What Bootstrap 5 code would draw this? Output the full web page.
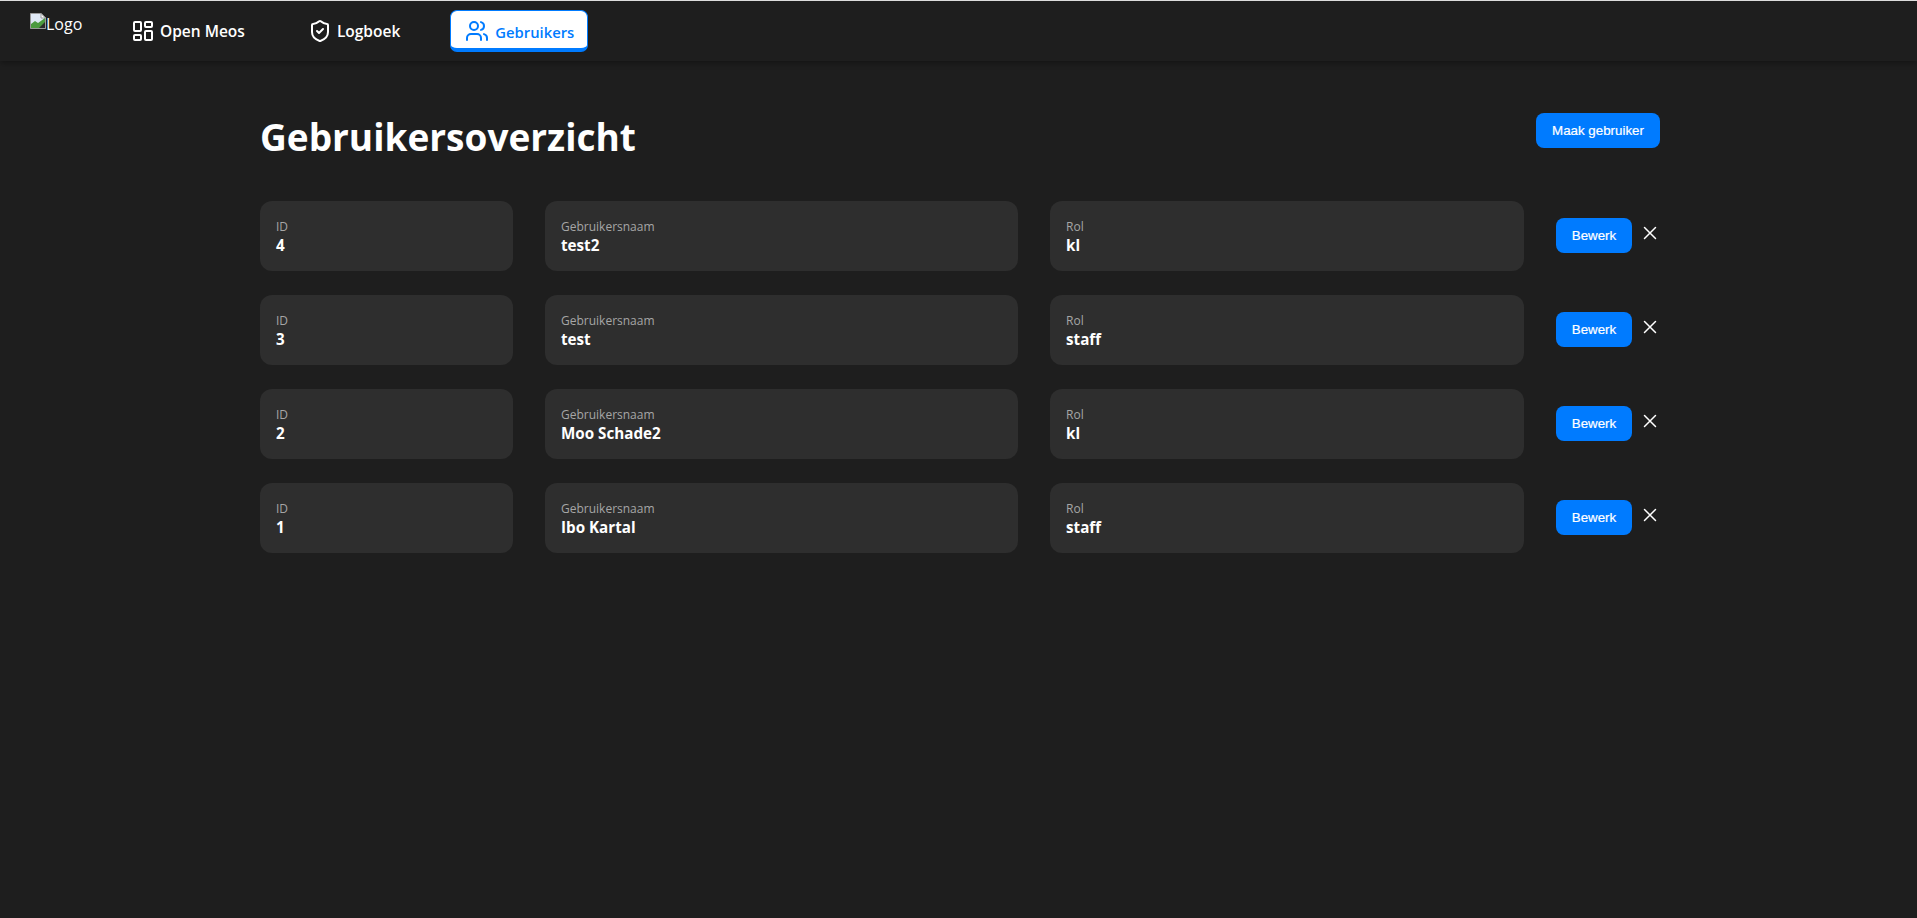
<!DOCTYPE html>
<html lang="nl"><head><meta charset="utf-8"><title>Gebruikers</title>
<link href="https://cdn.jsdelivr.net/npm/bootstrap@5.3.0/dist/css/bootstrap.min.css" rel="stylesheet">
<style>
html,body{height:100%}
body{background:#1e1e1e;color:#fff;font-family:"Open Sans","Noto Sans",sans-serif;overflow:hidden}
.topbar{height:61px;background:#1e1e1e;border-top:1px solid #ddd;box-shadow:0 2px 6px rgba(0,0,0,.35);padding:9px 0 0 30px;gap:32px}
.logo-alt{width:52px;height:24px;font-size:16px;line-height:22px;margin-right:1px;margin-top:3px}
.logo-alt svg{flex:none}
.nav-entry{height:42px;padding:0 16px;gap:5px;font-size:15.5px;font-weight:600;color:#fff;text-decoration:none;border-radius:7px}
.nav-entry span{padding-top:2px}
.nav-log{margin-left:-1px;margin-right:2px}
.nav-entry.on{background:#fff;color:#007bff;border:1px solid #007bff;border-bottom-width:4px;padding:3px 13px 0 14px;gap:6px;font-size:14.8px}
.page-wrap{width:1400px;margin-left:260px}
.head-line{padding-top:51px;height:140px}
.page-title{font-size:37px;font-weight:700;margin:0;line-height:50px}
.make-btn,.edit-btn{background:#007bff;border:0;color:#fff;font-family:"Liberation Sans",sans-serif;font-size:13.33px;-webkit-text-stroke:.2px #fff;border-radius:8px;height:35px;display:flex;align-items:center;justify-content:center;padding:0}
.make-btn:hover,.edit-btn:hover{background:#007bff;color:#fff}
.make-btn{width:124px;margin-top:1px}
.edit-btn{width:76px}
.user-row{display:grid;grid-template-columns:253px 473px 474px 1fr;column-gap:32px;margin-bottom:24px}
.info-tile{height:70px;background:#2e2e2e;border-radius:12px;padding:16px 16px 0;line-height:1}
.tile-label{font-size:12px;color:#a6a6a6;line-height:19px}
.tile-value{font-size:15.2px;font-weight:700;line-height:19px}
.row-actions{gap:10px;padding-bottom:1px}
.close-x{background:none;border:0;padding:0;width:16px;height:16px;display:flex;margin-bottom:5px}
</style></head><body>
<nav class="topbar d-flex align-items-start">
  <div class="logo-alt d-flex align-items-start">
    <svg width="16" height="16" viewBox="0 0 16 16"><path d="M.5.5H11L15.5 5v10.5H.5z" fill="#dfe8f5" stroke="#9a9a9a"/><path d="M11 .5V5h4.5z" fill="#fff" stroke="#9a9a9a"/><path d="M1 15V11L5 8l3 2 7-5v10z" fill="#4c9a3f"/><path d="M9 15l6-6v6z" fill="#2b2b2b"/></svg><span>Logo</span>
  </div>
  <a href="#" class="nav-entry d-flex align-items-center">
    <svg width="24" height="24" viewBox="0 0 24 24" fill="none" stroke="currentColor" stroke-width="2" stroke-linejoin="round"><rect x="3" y="3" width="7" height="9" rx="1"/><rect x="14" y="3" width="7" height="5" rx="1"/><rect x="14" y="12" width="7" height="9" rx="1"/><rect x="3" y="16" width="7" height="5" rx="1"/></svg>
    <span>Open Meos</span></a>
  <a href="#" class="nav-entry nav-log d-flex align-items-center">
    <svg width="24" height="24" viewBox="0 0 24 24" fill="none" stroke="currentColor" stroke-width="2" stroke-linecap="round" stroke-linejoin="round"><path d="M20 13c0 5-3.5 7.5-7.66 8.95a1 1 0 0 1-.67-.01C7.5 20.5 4 18 4 13V6a1 1 0 0 1 1-1c2 0 4.5-1.2 6.24-2.72a1.17 1.17 0 0 1 1.52 0C14.51 3.81 17 5 19 5a1 1 0 0 1 1 1z"/><path d="m9 12 2 2 4-4"/></svg>
    <span>Logboek</span></a>
  <a href="#" class="nav-entry on d-flex align-items-center">
    <svg width="24" height="24" viewBox="0 0 24 24" fill="none" stroke="currentColor" stroke-width="2" stroke-linecap="round" stroke-linejoin="round"><path d="M16 21v-2a4 4 0 0 0-4-4H6a4 4 0 0 0-4 4v2"/><circle cx="9" cy="7" r="4"/><path d="M22 21v-2a4 4 0 0 0-3-3.87"/><path d="M16 3.13a4 4 0 0 1 0 7.75"/></svg>
    <span>Gebruikers</span></a>
</nav>
<main class="page-wrap">
  <div class="head-line d-flex justify-content-between align-items-start">
    <h1 class="page-title">Gebruikersoverzicht</h1>
    <button class="btn make-btn">Maak gebruiker</button>
  </div>
  <div class="user-row">
    <div class="info-tile"><div class="tile-label">ID</div><div class="tile-value">4</div></div>
    <div class="info-tile"><div class="tile-label">Gebruikersnaam</div><div class="tile-value">test2</div></div>
    <div class="info-tile"><div class="tile-label">Rol</div><div class="tile-value">kl</div></div>
    <div class="row-actions d-flex align-items-center"><button class="btn edit-btn">Bewerk</button><button class="close-x" aria-label="Verwijder"><svg width="16" height="16" viewBox="0 0 16 16" stroke="#fff" stroke-width="1.5" stroke-linecap="round"><path d="M2.5 2.5l11 11M13.5 2.5l-11 11"/></svg></button></div>
  </div>
  <div class="user-row">
    <div class="info-tile"><div class="tile-label">ID</div><div class="tile-value">3</div></div>
    <div class="info-tile"><div class="tile-label">Gebruikersnaam</div><div class="tile-value">test</div></div>
    <div class="info-tile"><div class="tile-label">Rol</div><div class="tile-value">staff</div></div>
    <div class="row-actions d-flex align-items-center"><button class="btn edit-btn">Bewerk</button><button class="close-x" aria-label="Verwijder"><svg width="16" height="16" viewBox="0 0 16 16" stroke="#fff" stroke-width="1.5" stroke-linecap="round"><path d="M2.5 2.5l11 11M13.5 2.5l-11 11"/></svg></button></div>
  </div>
  <div class="user-row">
    <div class="info-tile"><div class="tile-label">ID</div><div class="tile-value">2</div></div>
    <div class="info-tile"><div class="tile-label">Gebruikersnaam</div><div class="tile-value">Moo Schade2</div></div>
    <div class="info-tile"><div class="tile-label">Rol</div><div class="tile-value">kl</div></div>
    <div class="row-actions d-flex align-items-center"><button class="btn edit-btn">Bewerk</button><button class="close-x" aria-label="Verwijder"><svg width="16" height="16" viewBox="0 0 16 16" stroke="#fff" stroke-width="1.5" stroke-linecap="round"><path d="M2.5 2.5l11 11M13.5 2.5l-11 11"/></svg></button></div>
  </div>
  <div class="user-row">
    <div class="info-tile"><div class="tile-label">ID</div><div class="tile-value">1</div></div>
    <div class="info-tile"><div class="tile-label">Gebruikersnaam</div><div class="tile-value">Ibo Kartal</div></div>
    <div class="info-tile"><div class="tile-label">Rol</div><div class="tile-value">staff</div></div>
    <div class="row-actions d-flex align-items-center"><button class="btn edit-btn">Bewerk</button><button class="close-x" aria-label="Verwijder"><svg width="16" height="16" viewBox="0 0 16 16" stroke="#fff" stroke-width="1.5" stroke-linecap="round"><path d="M2.5 2.5l11 11M13.5 2.5l-11 11"/></svg></button></div>
  </div>
</main>
<script src="https://cdn.jsdelivr.net/npm/bootstrap@5.3.0/dist/js/bootstrap.bundle.min.js"></script>
</body></html>
